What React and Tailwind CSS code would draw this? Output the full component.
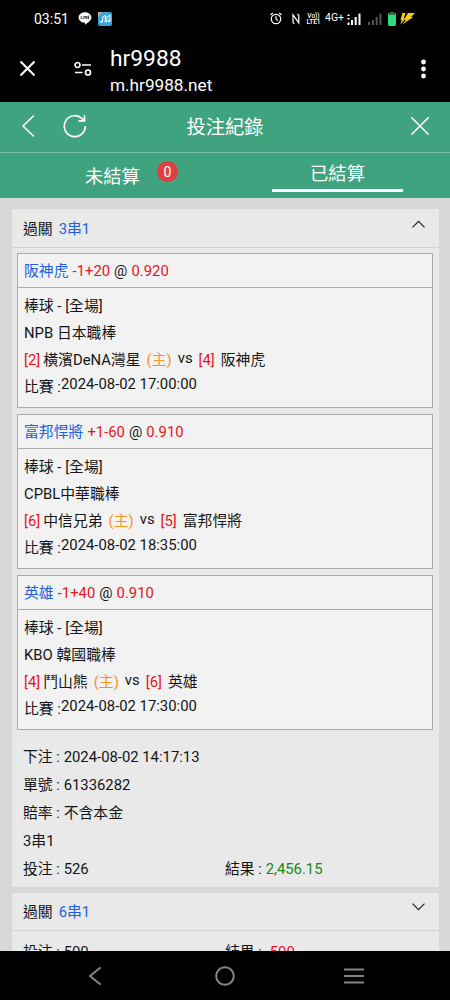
import React, { useState } from 'react';

const TICKETS = [
  {
    id: '61336282',
    type: '3串1',
    placedAt: '2024-08-02 14:17:13',
    oddsType: '不含本金',
    stake: '526',
    result: '2,456.15',
    win: true,
    legs: [
      {
        pick: '阪神虎', line: '-1+20', odds: '0.920', league: 'NPB 日本職棒',
        homeNo: 2, home: '橫濱DeNA灣星', awayNo: 4, away: '阪神虎', time: '2024-08-02 17:00:00',
      },
      {
        pick: '富邦悍將', line: '+1-60', odds: '0.910', league: 'CPBL中華職棒',
        homeNo: 6, home: '中信兄弟', awayNo: 5, away: '富邦悍將', time: '2024-08-02 18:35:00',
      },
      {
        pick: '英雄', line: '-1+40', odds: '0.910', league: 'KBO 韓國職棒',
        homeNo: 4, home: '鬥山熊', awayNo: 6, away: '英雄', time: '2024-08-02 17:30:00',
      },
    ],
  },
  { id: 'next', type: '6串1', stake: '500', result: '-500', win: false, legs: [] },
];

// --- STATUS BAR ---
const Signal = ({ className, data }) => (
  <svg className={className} width="14" height="12" viewBox="0 0 14 12" fill="currentColor">
    {data ? <path d="M1.500 1l1.500 2H0zM1.500 7L0 5h3zM.5 9.500h2V12h-2z" /> : <path d="M0 9h2v3H0z" />}
    <path d="M4 7h2v5H4zM7.700 4h2v8h-2zM11.500 .5h2V12h-2z" />
  </svg>
);

const StatusBar = () => (
  <div className="flex h-[37px] items-center bg-black pr-[35px] pl-[34px] text-white">
    <span className="w-[44px] text-[14px] leading-none">03:51</span>
    <svg width="14" height="13" viewBox="0 0 14 13">
      <path d="M7 .3c3.600 0 6.400 2.300 6.400 5.200 0 2.600-3.200 5.200-6.300 7.200.2-1.100.2-1.900-.4-2C3.200 10.500.6 8.300.6 5.500.6 2.600 3.400.3 7 .3z" fill="#fff" />
      <path d="M3.200 4v2.700h1.400M5.700 4v2.700M7 6.700V4l1.700 2.700V4M11.400 4H10v2.700h1.400M10 5.300h1.200" fill="none" stroke="#222" strokeWidth=".8" />
    </svg>
    <svg className="ml-[6px]" width="14" height="14" viewBox="0 0 14 14">
      <rect width="14" height="14" rx="2" fill="#35a7dc" />
      <path d="M0 0h4.500L0 5z" fill="#c8a184" />
      <path d="M4.600 9.500V5l2.800-1.500v5M8.800 9.200V5l3.200-1.800v5.800" fill="none" stroke="#fff" strokeWidth="1" />
      <ellipse cx="3.500" cy="9.700" rx="1.300" ry="1" fill="#fff" />
      <ellipse cx="7.700" cy="9.500" rx="1.200" ry="1" fill="#fff" />
      <ellipse cx="11" cy="9" rx="1.200" ry="1" fill="#fff" />
    </svg>

    <div className="ml-auto flex items-center">
      <svg width="12" height="13" viewBox="0 0 12 13" fill="none" stroke="#fff" strokeWidth="1.200">
        <circle cx="6" cy="7" r="4.700" />
        <path d="M6 4.300V7l1.800 1.600M.5 3l2.300-2M11.500 3L9.200 1" />
      </svg>
      <svg className="ml-[10px]" width="8" height="12" viewBox="0 0 8 12" fill="none" stroke="#fff" strokeWidth="1.200">
        <path d="M2.300 10.800L1 9.500V1.800l5.800 8V2.300L5.500 1" />
      </svg>
      <div className="ml-[6px] flex w-[15px] flex-col items-center text-[6.500px] leading-[6px] font-medium">
        <span>Vo))</span>
        <span>LTE1</span>
      </div>
      <span className="ml-[4px] w-[19px] text-[10.500px] leading-none whitespace-nowrap">4G+</span>
      <Signal data className="ml-[3px] text-white" />
      <Signal className="ml-[7px] text-[#555]" />
      <svg className="ml-[6px]" width="8" height="14" viewBox="0 0 8 14">
        <path d="M2.500 0h3v1.200H8V12.500L7 14H1l-1-1.500V1.200h2.500z" fill="#2fdc7c" />
        <path d="M2.500 0h3v1.200H7.500V3h-7V1.200h2z" fill="#286c43" />
      </svg>
      <svg className="ml-[4px]" width="15" height="12" viewBox="0 0 15 12" fill="#f2cb18">
        <path d="M2.300 0h3.200L3.800 5.200h2L.3 11.800l1.400-5H.5zM8 0h7l-4 4h2.300L2.500 11.500 6 6.800H3.800z" />
      </svg>
    </div>
  </div>
);

// --- BROWSER BAR ---
const BrowserBar = () => (
  <div className="flex h-[65px] items-center bg-black pr-[24px] pl-[19px] text-white">
    <svg className="mt-[-2px]" width="17" height="17" viewBox="0 0 17 17" fill="none" stroke="#fff" strokeWidth="2">
      <path d="M1.500 1.500l14 14M15.500 1.500l-14 14" />
    </svg>
    <svg className="mt-[-1px] ml-[38px]" width="18" height="16" viewBox="0 0 18 16" fill="none" stroke="#fff" strokeWidth="1.700">
      <circle cx="3.500" cy="4" r="2.500" />
      <path d="M8 4h9M1 11.500h7.500" />
      <circle cx="14" cy="11.500" r="2.500" />
    </svg>
    <div className="ml-[18px] flex h-full flex-col pt-[9px]">
      <span className="text-[22.800px] leading-[26px]">hr9988</span>
      <span className="text-[17.200px] leading-[26px]">m.hr9988.net</span>
    </div>
    <svg className="mt-[-2px] ml-auto" width="5" height="20" viewBox="0 0 5 20" fill="#fff">
      <circle cx="2.500" cy="3" r="2.400" />
      <circle cx="2.500" cy="10" r="2.400" />
      <circle cx="2.500" cy="17" r="2.400" />
    </svg>
  </div>
);

// --- PAGE HEADER ---
const PageHeader = () => (
  <div className="grid h-[51px] grid-cols-[1fr_auto_1fr] items-center border-b border-[#78bea1] px-[21px] text-white">
    <div className="mt-[-3px] flex items-center">
      <svg width="14" height="24" viewBox="0 0 14 24" fill="none" stroke="#fff" strokeWidth="1.600">
        <path d="M13 1.500L2 12l11 10.500" />
      </svg>
      <svg className="ml-[28px]" width="24" height="24" viewBox="0 0 24 24" fill="none" stroke="#fff" strokeWidth="1.700">
        <path d="M22.300 12A10.500 10.500 0 1 1 19 4.500L21.500 7" />
        <path d="M21.500 1.200V6.800h-6" />
      </svg>
    </div>
    <h1 className="mt-[1px] text-[19.300px] leading-none">投注紀錄</h1>
    <svg className="mt-[-2px] mr-[-1px] ml-auto" width="20" height="20" viewBox="0 0 20 20" fill="none" stroke="#fff" strokeWidth="1.700">
      <path d="M1.500 1.500l17 17M18.500 1.500l-17 17" />
    </svg>
  </div>
);

const Tabs = ({ tab, setTab }) => (
  <div className="grid h-[45px] grid-cols-2 text-[18.300px] text-white">
    <button onClick={() => setTab('open')} className="flex items-start pl-[85px]">
      <span className="mt-[11px] leading-[25px]">未結算</span>
      <span className="mt-[8px] ml-[17px] flex size-[21px] items-center justify-center rounded-full bg-[#dd4040] text-[14px] leading-none">0</span>
    </button>
    <button onClick={() => setTab('settled')} className="flex items-start justify-center">
      <span className={`flex h-[39px] w-[131px] items-center justify-center border-b-[3px] pt-[5px] ${tab === 'settled' ? 'border-white' : 'border-transparent'}`}>
        已結算
      </span>
    </button>
  </div>
);

const Leg = ({ leg }) => (
  <div className="h-[155px] border border-[#ababab] bg-[#f2f2f2]">
    <div className="flex h-[34px] items-center gap-[4px] border-b border-[#ababab] pt-[2px] pl-[6px]">
      <span className="text-[#2060e0]">{leg.pick}</span>
      <span className="text-[#e8141c]">{leg.line}</span>
      <span>@</span>
      <span className="text-[#e8141c]">{leg.odds}</span>
    </div>
    <div className="pt-[5px] pl-[6px] leading-[27px]">
      <p>棒球 - [全場]</p>
      <p>{leg.league}</p>
      <div className="flex h-[27px] whitespace-pre">
        <span className="text-[#e8141c]">[{leg.homeNo}]</span>
        <span className="ml-[3px]">{leg.home}</span>
        <span className="ml-[6px] text-[#f7941d]">(主)</span>
        <span className="mx-[6px] leading-[23px]">vs</span>
        <span className="text-[#e8141c]">[{leg.awayNo}]</span>
        <span className="ml-[6px]">{leg.away}</span>
      </div>
      <div className="flex">
        <span>比賽 :</span>
        <span className="leading-[21px]">{leg.time}</span>
      </div>
    </div>
  </div>
);

const Field = ({ label, children }) => (
  <p>
    {label} : {children}
  </p>
);

const Ticket = ({ ticket, open, onToggle }) => (
  <section className="bg-[#e9e9e9]">
    <div onClick={onToggle} className={`flex items-center border-b border-[#d2d2d2] pr-[14px] pl-[11px] ${open ? 'h-[39px]' : 'h-[38px]'}`}>
      <span className="pt-[2px]">過關</span>
      <span className="ml-[6px] pt-[2px] text-[#2060e0]">{ticket.type}</span>
      <svg
        className={`mb-[9px] ml-auto ${open ? '' : 'mb-[7px] rotate-180'}`}
        width="13" height="8" viewBox="0 0 13 8" fill="none" stroke="#222" strokeWidth="1.200"
      >
        <path d="M.5 7.300l6-6 6 6" />
      </svg>
    </div>

    {open && (
      <div className="flex flex-col gap-[6px] pt-[5px] pr-[6px] pl-[5px]">
        {ticket.legs.map((leg) => <Leg key={leg.pick} leg={leg} />)}
      </div>
    )}

    <div className={`pl-[11px] leading-[28px] ${open ? 'pt-[13px] pb-[4px]' : 'pt-[7px]'}`}>
      {open && (
        <>
          <Field label="下注">{ticket.placedAt}</Field>
          <Field label="單號">{ticket.id}</Field>
          <Field label="賠率">{ticket.oddsType}</Field>
          <p>{ticket.type}</p>
        </>
      )}
      <div className="flex">
        <div className="w-[202px]"><Field label="投注">{ticket.stake}</Field></div>
        <Field label="結果">
          <span className={ticket.win ? 'text-[#168820]' : 'text-[#e8141c]'}>{ticket.result}</span>
        </Field>
      </div>
    </div>
  </section>
);

// --- ANDROID NAVIGATION ---
const NavBar = () => (
  <div className="flex h-[49px] shrink-0 items-center bg-black pl-[88px]">
    <svg width="14" height="20" viewBox="0 0 14 20" fill="none" stroke="#858585" strokeWidth="2">
      <path d="M12.500 1.500L2 10l10.500 8.500" />
    </svg>
    <svg className="ml-[113px]" width="20" height="20" viewBox="0 0 20 20" fill="none" stroke="#858585" strokeWidth="2">
      <circle cx="10" cy="10" r="8.800" />
    </svg>
    <svg className="ml-[109px]" width="20" height="16" viewBox="0 0 20 16" fill="none" stroke="#858585" strokeWidth="2">
      <path d="M0 1.500h20M0 8h20M0 14.500h20" />
    </svg>
  </div>
);

export default function App() {
  const [tab, setTab] = useState('settled');
  const [openId, setOpenId] = useState('61336282');

  return (
    <div className="flex h-[1000px] w-[450px] flex-col overflow-hidden bg-[#d8d8d8] font-[Roboto,'Noto_Sans_CJK_TC',sans-serif] text-[14.850px] text-[#151515]">
      <StatusBar />
      <BrowserBar />
      <header className="h-[96px] shrink-0 bg-[#40a37f]">
        <PageHeader />
        <Tabs tab={tab} setTab={setTab} />
      </header>
      <main className="flex min-h-0 flex-1 flex-col gap-[6px] overflow-hidden pt-[11px] pr-[11px] pl-[12px]">
        {TICKETS.map((t) => (
          <Ticket key={t.id} ticket={t} open={openId === t.id} onToggle={() => setOpenId(openId === t.id ? '' : t.id)} />
        ))}
      </main>
      <NavBar />
    </div>
  );
}
